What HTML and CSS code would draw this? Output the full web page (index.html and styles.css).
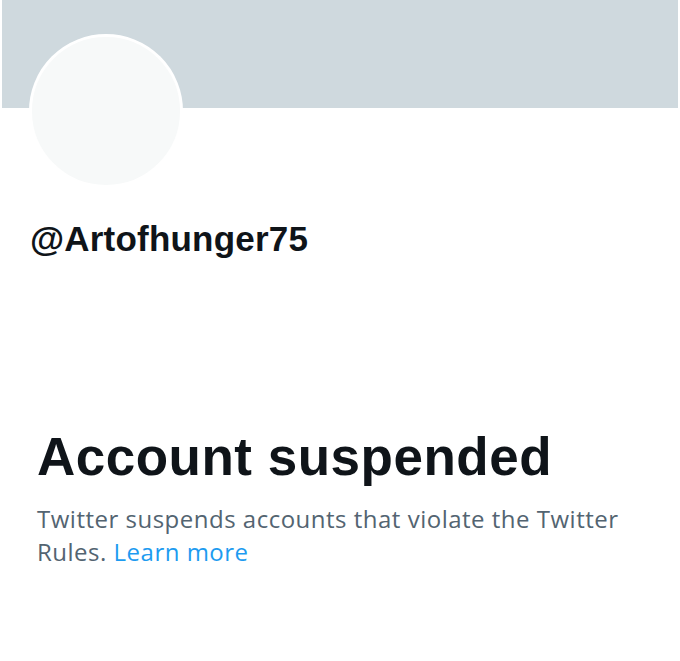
FILE: index.html
```html
<!DOCTYPE html>
<html>
<head>
<meta charset="utf-8">
<link rel="stylesheet" href="styles.css">
</head>
<body>
<div class="page">
  <div class="header">
    <div class="banner"></div>
    <div class="avatar-row"><div class="avatar"></div></div>
  </div>
  <div class="handle">@Artofhunger75</div>
  <div class="notice">
    <h1 class="title">Account suspended</h1>
    <p class="desc">Twitter suspends accounts that violate the Twitter Rules. <a class="link" href="#">Learn more</a></p>
  </div>
</div>
</body>
</html>
```
FILE: styles.css
```css
html, body {
  margin: 0;
  padding: 0;
  background: #ffffff;
}
.page {
  width: 680px;
  height: 661px;
  overflow: hidden;
  font-family: "Liberation Sans", Arial, sans-serif;
  color: #0f1419;
}
.header {
  position: relative;
  height: 188px;
}
.banner {
  margin: 0 2px;
  height: 108px;
  background: #cfd9de;
}
.avatar-row {
  position: absolute;
  left: 29px;
  top: 34px;
}
.avatar {
  width: 148px;
  height: 148px;
  border-radius: 50%;
  background: #f7f9f9;
  border: 3px solid #ffffff;
}
.handle {
  margin: 31px 0 0 30px;
  font-size: 35px;
  font-weight: 700;
  line-height: 40px;
  letter-spacing: 0.2px;
}
.notice {
  padding: 168px 40px 0 37px;
}
.title {
  margin: 0;
  font-size: 53px;
  font-weight: 700;
  line-height: 60px;
  letter-spacing: 0.5px;
}
.desc {
  margin: 15px 0 0;
  font-family: "Open Sans", "Liberation Sans", sans-serif;
  font-size: 24px;
  line-height: 33px;
  letter-spacing: 0.5px;
  color: #536471;
}
.link {
  color: #1d9bf0;
  text-decoration: none;
}
```
